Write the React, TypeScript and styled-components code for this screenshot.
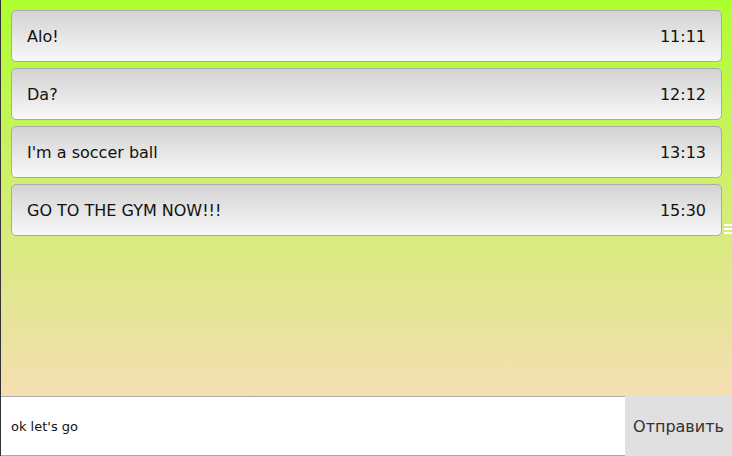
import React from 'react'
import styled, { createGlobalStyle } from 'styled-components'

const GlobalStyle = createGlobalStyle`
  html, body {
    margin: 0;
    padding: 0;
  }
  body {
    font-family: "DejaVu Sans", sans-serif;
  }
`

type Message = { text: string; time: string }

const messages: Message[] = [
  { text: 'Alo!', time: '11:11' },
  { text: 'Da?', time: '12:12' },
  { text: "I'm a soccer ball", time: '13:13' },
  { text: 'GO TO THE GYM NOW!!!', time: '15:30' },
]

function App() {
  return (
    <>
      <GlobalStyle />
      <Page>
        <List>
          {messages.map((m) => (
            <Card key={m.time}>
              <span>{m.text}</span>
              <span>{m.time}</span>
            </Card>
          ))}
          <Grip>
            <svg width="8" height="10" viewBox="0 0 8 10">
              <rect x="0" y="0" width="8" height="2" fill="#fff" />
              <rect x="0" y="4" width="8" height="2" fill="#fff" />
              <rect x="0" y="8" width="8" height="2" fill="#fff" />
            </svg>
          </Grip>
        </List>
        <Footer>
          <Input defaultValue="ok let's go" />
          <SendButton>Отправить</SendButton>
        </Footer>
      </Page>
    </>
  )
}

export default App

const Page = styled.div`
  height: 456px;
  display: flex;
  flex-direction: column;
  border-left: 1px solid #333;
  box-sizing: border-box;
  background: linear-gradient(to bottom, #adff2f 0px, #f5deb3 396px, #f5deb3 100%);
`

const List = styled.div`
  position: relative;
  flex: 1;
  display: flex;
  flex-direction: column;
  gap: 6px;
  padding: 10px 10px 0 10px;
`

const Card = styled.div`
  height: 52px;
  box-sizing: border-box;
  display: flex;
  justify-content: space-between;
  align-items: center;
  padding: 0 15px;
  border: 1px solid #aaa;
  border-radius: 5px;
  background: linear-gradient(to bottom, #d3d3d3, #f8f8f8);
  font-size: 16px;
  color: #111;
`

const Grip = styled.div`
  position: absolute;
  right: 0;
  top: 224px;
  line-height: 0;
`

const Footer = styled.div`
  height: 60px;
  display: flex;
`

const Input = styled.input`
  flex: 1;
  min-width: 0;
  box-sizing: border-box;
  height: 60px;
  margin: 0;
  padding: 0 10px;
  border: none;
  border-top: 1px solid #aaa;
  border-bottom: 1px solid #aaa;
  background: #fff;
  font-family: "DejaVu Sans", sans-serif;
  font-size: 13px;
  color: #111;
  outline: none;
`

const SendButton = styled.button`
  width: 107px;
  height: 60px;
  margin: 0;
  padding: 0;
  border: none;
  background: #e0e0e0;
  font-family: "DejaVu Sans", sans-serif;
  font-size: 16px;
  color: #333;
  cursor: pointer;
`
